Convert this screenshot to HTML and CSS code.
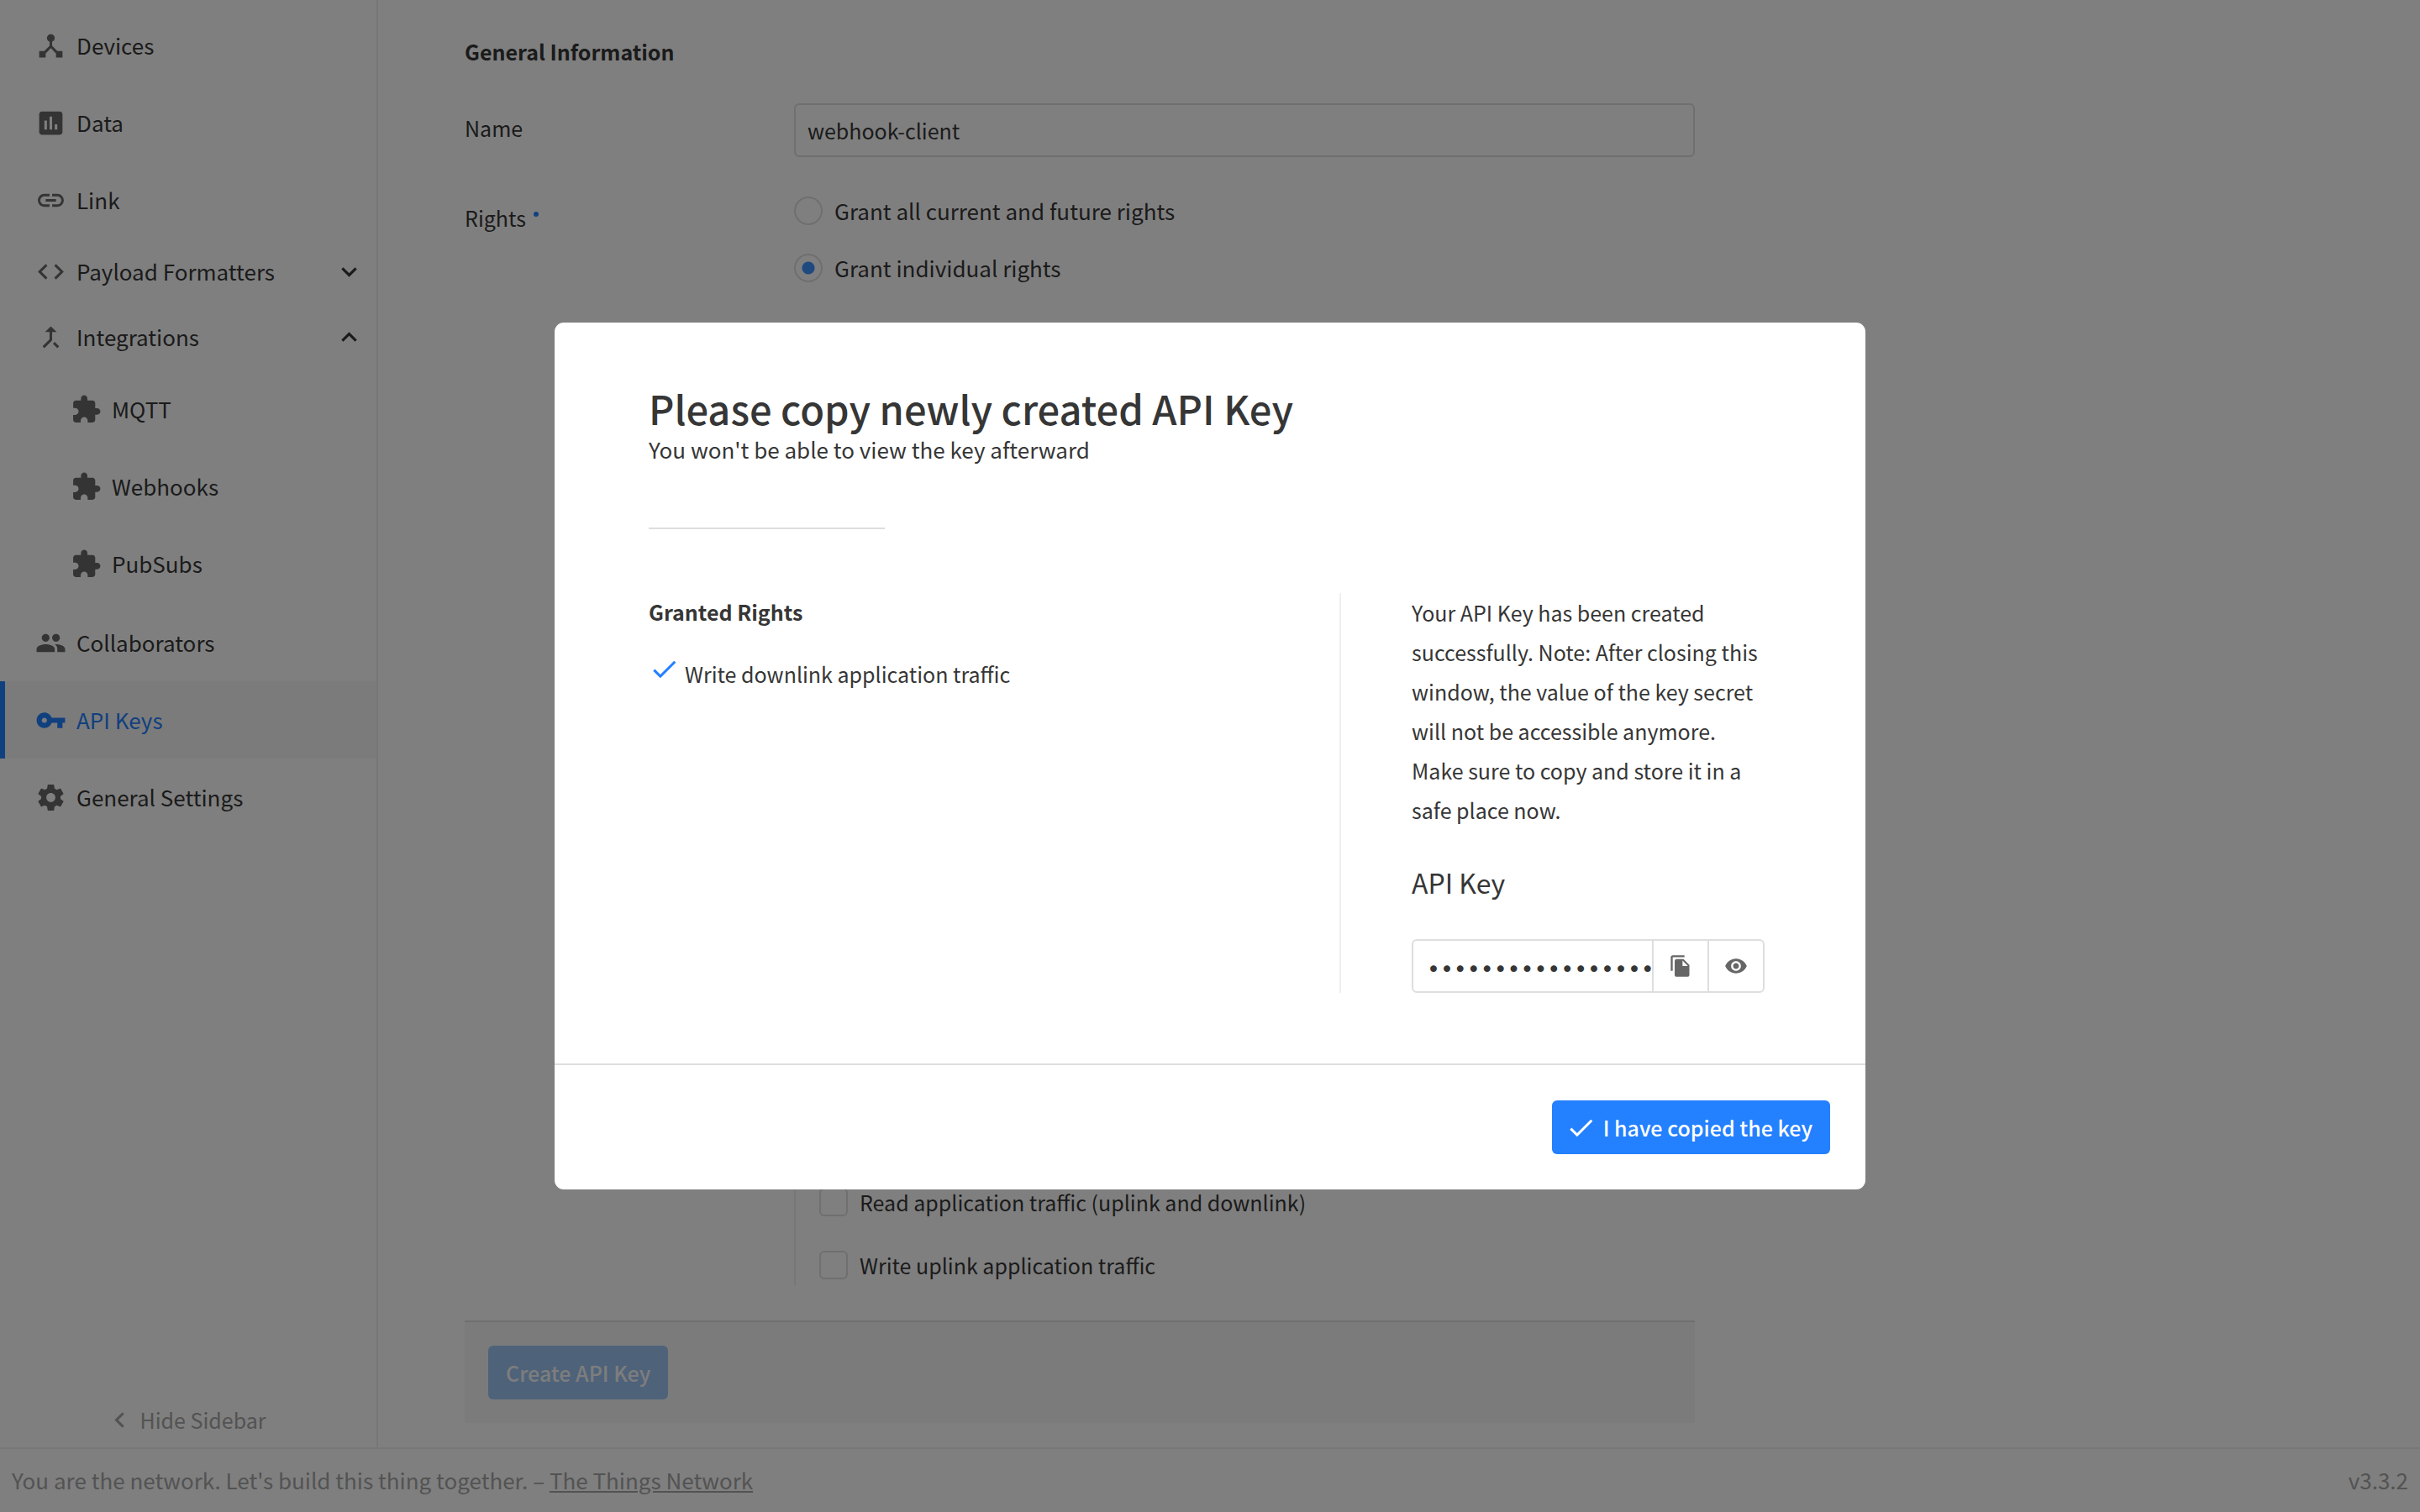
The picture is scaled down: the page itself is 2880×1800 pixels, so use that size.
FILE: index.html
```html
<!DOCTYPE html>
<html lang="en">
<head>
<meta charset="utf-8">
<title>Add API Key - The Things Network</title>
<link rel="stylesheet" href="styles.css">
</head>
<body>
<svg class="sprite" aria-hidden="true">
  <symbol id="i-hub" viewBox="0 0 24 24"><path d="M17 16l-4-4V8.82C14.16 8.4 15 7.3 15 6c0-1.66-1.34-3-3-3S9 4.34 9 6c0 1.3.84 2.4 2 2.82V12l-4 4H3v5h5v-3.05l4-4.2 4 4.2V21h5v-5h-4z"/></symbol>
  <symbol id="i-data" viewBox="0 0 24 24"><path d="M19 3H5c-1.1 0-2 .9-2 2v14c0 1.1.9 2 2 2h14c1.1 0 2-.9 2-2V5c0-1.1-.9-2-2-2zM9 17H7v-7h2v7zm4 0h-2V7h2v10zm4 0h-2v-4h2v4z"/></symbol>
  <symbol id="i-link" viewBox="0 0 24 24"><path d="M3.9 12c0-1.71 1.39-3.1 3.1-3.1h4V7H7c-2.76 0-5 2.24-5 5s2.24 5 5 5h4v-1.9H7c-1.71 0-3.1-1.39-3.1-3.1zM8 13h8v-2H8v2zm9-6h-4v1.9h4c1.71 0 3.1 1.39 3.1 3.1s-1.39 3.1-3.1 3.1h-4V17h4c2.76 0 5-2.24 5-5s-2.24-5-5-5z"/></symbol>
  <symbol id="i-code" viewBox="0 0 24 24"><path d="M9.4 16.6L4.8 12l4.6-4.6L8 6l-6 6 6 6 1.4-1.4zm5.2 0l4.6-4.6-4.6-4.6L16 6l6 6-6 6-1.4-1.4z"/></symbol>
  <symbol id="i-merge" viewBox="0 0 24 24"><path d="M17 20.41L18.41 19 15 15.59 13.59 17 17 20.41zM7.5 8H11v5.59L5.59 19 7 20.41l6-6V8h3.5L12 3.5 7.5 8z"/></symbol>
  <symbol id="i-ext" viewBox="0 0 24 24"><path d="M20.5 11H19V7c0-1.1-.9-2-2-2h-4V3.5C13 2.12 11.88 1 10.5 1S8 2.12 8 3.5V5H4c-1.1 0-1.99.9-1.99 2v3.8H3.5c1.49 0 2.7 1.21 2.7 2.7s-1.21 2.7-2.7 2.7H2V20c0 1.1.9 2 2 2h3.8v-1.5c0-1.49 1.21-2.7 2.7-2.7 1.49 0 2.7 1.21 2.7 2.7V22H17c1.1 0 2-.9 2-2v-4h1.5c1.38 0 2.5-1.12 2.5-2.5S21.88 11 20.5 11z"/></symbol>
  <symbol id="i-people" viewBox="0 0 24 24"><path d="M16 11c1.66 0 2.99-1.34 2.99-3S17.66 5 16 5c-1.66 0-3 1.34-3 3s1.34 3 3 3zm-8 0c1.66 0 2.99-1.34 2.99-3S9.66 5 8 5C6.34 5 5 6.34 5 8s1.34 3 3 3zm0 2c-2.33 0-7 1.17-7 3.5V19h14v-2.5c0-2.33-4.67-3.5-7-3.5zm8 0c-.29 0-.62.02-.97.05 1.16.84 1.97 1.97 1.97 3.45V19h6v-2.5c0-2.33-4.67-3.5-7-3.5z"/></symbol>
  <symbol id="i-key" viewBox="0 0 24 24"><path d="M12.65 10C11.83 7.67 9.61 6 7 6c-3.31 0-6 2.69-6 6s2.69 6 6 6c2.61 0 4.83-1.67 5.65-4H17v4h4v-4h2v-4H12.65zM7 14c-1.1 0-2-.9-2-2s.9-2 2-2 2 .9 2 2-.9 2-2 2z"/></symbol>
  <symbol id="i-gear" viewBox="0 0 24 24"><path d="M19.43 12.98c.04-.32.07-.64.07-.98s-.03-.66-.07-.98l2.11-1.65c.19-.15.24-.42.12-.64l-2-3.46c-.12-.22-.39-.3-.61-.22l-2.49 1c-.52-.4-1.08-.73-1.69-.98l-.38-2.65C14.46 2.18 14.25 2 14 2h-4c-.25 0-.46.18-.49.42l-.38 2.65c-.61.25-1.17.59-1.69.98l-2.49-1c-.23-.09-.49 0-.61.22l-2 3.46c-.13.22-.07.49.12.64l2.11 1.65c-.04.32-.07.65-.07.98s.03.66.07.98l-2.11 1.65c-.19.15-.24.42-.12.64l2 3.46c.12.22.39.3.61.22l2.49-1c.52.4 1.08.73 1.69.98l.38 2.65c.03.24.24.42.49.42h4c.25 0 .46-.18.49-.42l.38-2.65c.61-.25 1.17-.59 1.69-.98l2.49 1c.23.09.49 0 .61-.22l2-3.46c.12-.22.07-.49-.12-.64l-2.11-1.65zM12 15.5c-1.93 0-3.5-1.57-3.5-3.5s1.57-3.5 3.5-3.5 3.5 1.57 3.5 3.5-1.57 3.5-3.5 3.5z"/></symbol>
  <symbol id="i-down" viewBox="0 0 24 24"><path d="M16.59 8.59L12 13.17 7.41 8.59 6 10l6 6 6-6z"/></symbol>
  <symbol id="i-up" viewBox="0 0 24 24"><path d="M12 8l-6 6 1.41 1.41L12 10.83l4.59 4.58L18 14z"/></symbol>
  <symbol id="i-left" viewBox="0 0 24 24"><path d="M15.41 7.41L14 6l-6 6 6 6 1.41-1.41L10.83 12z"/></symbol>
  <symbol id="i-check" viewBox="0 0 24 24"><path d="M9 16.2L4.8 12l-1.4 1.4L9 19 21 7l-1.4-1.4L9 16.2z"/></symbol>
  <symbol id="i-copy" viewBox="0 0 24 24"><path d="M16 1H4c-1.1 0-2 .9-2 2v14h2V3h12V1zm-1 4l6 6v10c0 1.1-.9 2-2 2H7.99C6.89 23 6 22.1 6 21l.01-14c0-1.1.89-2 1.99-2h7zm-1 7h5.5L14 6.5V12z"/></symbol>
  <symbol id="i-eye" viewBox="0 0 24 24"><path d="M12 4.5C7 4.5 2.73 7.61 1 12c1.73 4.39 6 7.5 11 7.5s9.27-3.11 11-7.5c-1.73-4.39-6-7.5-11-7.5zM12 17c-2.76 0-5-2.24-5-5s2.24-5 5-5 5 2.24 5 5-2.24 5-5 5zm0-8c-1.66 0-3 1.34-3 3s1.34 3 3 3 3-1.34 3-3-1.34-3-3-3z"/></symbol>
</svg>

<div class="shell">
  <aside class="sidebar">
    <nav>
      <ul class="nav">
        <li><a class="nav-item" href="#devices"><svg class="icon"><use href="#i-hub"/></svg>Devices</a></li>
        <li><a class="nav-item" href="#data"><svg class="icon"><use href="#i-data"/></svg>Data</a></li>
        <li><a class="nav-item" href="#link"><svg class="icon"><use href="#i-link"/></svg>Link</a></li>
        <li><button class="nav-item nav-toggle" type="button"><svg class="icon"><use href="#i-code"/></svg>Payload Formatters<svg class="icon chevron"><use href="#i-down"/></svg></button></li>
        <li>
          <button class="nav-item nav-toggle" type="button"><svg class="icon"><use href="#i-merge"/></svg>Integrations<svg class="icon chevron"><use href="#i-up"/></svg></button>
          <ul class="nav nav-sub">
            <li><a class="nav-item" href="#mqtt"><svg class="icon"><use href="#i-ext"/></svg>MQTT</a></li>
            <li><a class="nav-item" href="#webhooks"><svg class="icon"><use href="#i-ext"/></svg>Webhooks</a></li>
            <li><a class="nav-item" href="#pubsubs"><svg class="icon"><use href="#i-ext"/></svg>PubSubs</a></li>
          </ul>
        </li>
        <li><a class="nav-item" href="#collaborators"><svg class="icon"><use href="#i-people"/></svg>Collaborators</a></li>
        <li><a class="nav-item active" href="#api-keys"><svg class="icon"><use href="#i-key"/></svg>API Keys</a></li>
        <li><a class="nav-item" href="#settings"><svg class="icon"><use href="#i-gear"/></svg>General Settings</a></li>
      </ul>
    </nav>
    <button class="hide-sidebar" type="button"><svg class="icon"><use href="#i-left"/></svg>Hide Sidebar</button>
  </aside>

  <main class="main">
    <form class="form">
      <h2 class="form-title">General Information</h2>
      <div class="row">
        <label class="label" for="name">Name</label>
        <input class="text-input" id="name" type="text" value="webhook-client">
      </div>
      <div class="row row-rights" role="group" aria-labelledby="rights-label">
        <span class="label" id="rights-label">Rights<span class="required"></span></span>
        <div class="rights">
          <label class="radio"><input type="radio" name="grant">Grant all current and future rights</label>
          <label class="radio"><input type="radio" name="grant" checked>Grant individual rights</label>
          <div class="rights-list">
            <label class="check"><input type="checkbox">Read application traffic (uplink and downlink)</label>
            <label class="check"><input type="checkbox">Write uplink application traffic</label>
          </div>
        </div>
      </div>
      <div class="submit-bar"><button class="button" type="submit" disabled>Create API Key</button></div>
    </form>
  </main>
</div>

<footer class="footer">
  <span>You are the network. Let's build this thing together. – <a href="#ttn">The Things Network</a></span>
  <span>v3.3.2</span>
</footer>

<div class="overlay">
  <section class="modal" role="dialog" aria-modal="true" aria-labelledby="modal-title">
    <div class="modal-body">
      <h1 class="modal-title" id="modal-title">Please copy newly created API Key</h1>
      <p class="modal-subtitle">You won't be able to view the key afterward</p>
      <hr class="rule">
      <div class="columns">
        <div class="granted">
          <h2 class="granted-title">Granted Rights</h2>
          <ul class="granted-list">
            <li><svg class="icon"><use href="#i-check"/></svg>Write downlink application traffic</li>
          </ul>
        </div>
        <div class="secret">
          <p class="secret-note">Your API Key has been created successfully. Note: After closing this window, the value of the key secret will not be accessible anymore. Make sure to copy and store it in a safe place now.</p>
          <label class="secret-title" for="key">API Key</label>
          <div class="secret-field">
            <input id="key" type="password" value="NNSXS.ABCDEFGHIJKLMNOPQ" readonly>
            <button type="button" aria-label="Copy"><svg class="icon"><use href="#i-copy"/></svg></button>
            <button type="button" aria-label="Show"><svg class="icon"><use href="#i-eye"/></svg></button>
          </div>
        </div>
      </div>
    </div>
    <div class="modal-footer">
      <button class="button button-icon" type="button"><svg class="icon"><use href="#i-check"/></svg>I have copied the key</button>
    </div>
  </section>
</div>
</body>
</html>
```
FILE: styles.css
```css
:root {
  --text: #363636;
  --muted: #a6a6a6;
  --icon: #686868;
  --blue: #2380ff;
  --line: #dedede;
  --line-soft: #efefef;
}

* { box-sizing: border-box; }

body {
  margin: 0;
  height: 100vh;
  display: flex;
  flex-direction: column;
  background: #fff;
  color: var(--text);
  font: 400 25px/48px "Noto Sans CJK SC", "Noto Sans", sans-serif;
}

h1, h2, p, ul { margin: 0; padding: 0; }
ul { list-style: none; }
button, input { font: inherit; color: inherit; }
button { border: 0; background: none; padding: 0; cursor: pointer; }

.sprite { display: none; }
.icon { width: 37px; height: 37px; flex: none; fill: currentColor; }

.shell { flex: 1; display: flex; min-height: 0; }

/* Sidebar */
.sidebar {
  width: 450px;
  flex: none;
  display: flex;
  flex-direction: column;
  justify-content: space-between;
  padding-top: 8px;
  border-right: 2px solid var(--line-soft);
}
.nav-item {
  display: flex;
  align-items: center;
  gap: 12px;
  width: 100%;
  height: 92px;
  padding: 0 14px 0 36px;
  border-left: 6px solid transparent;
  color: var(--text);
  font-size: 26px;
  text-align: left;
  text-decoration: none;
}
.nav-item .icon { color: var(--icon); }
.nav-toggle { height: 78px; }
.nav-item .chevron { margin-left: auto; color: var(--text); }
.nav-sub { padding: 1px 0 2px; }
.nav-sub .nav-item { padding-left: 78px; }
.nav-item.active { background: #f7f7f7; border-left-color: var(--blue); }
.nav-item.active, .nav-item.active .icon { color: var(--blue); }
.hide-sidebar {
  display: flex;
  align-items: center;
  justify-content: center;
  gap: 6px;
  height: 66px;
  padding-right: 8px;
  color: var(--muted);
}

/* Form */
.main { flex: 1; display: flex; padding: 37px 103px 29px; }
.form { width: 1464px; display: flex; flex-direction: column; }
.form-title { font-size: 25px; line-height: 48px; margin-bottom: 38px; }
.row { display: grid; grid-template-columns: 392px 1fr; }
.row-rights { flex: 1; margin: 43px 0 42px; }
.label { padding-top: 5px; }
.required {
  display: inline-block;
  width: 6px;
  height: 6px;
  margin-left: 9px;
  border-radius: 50%;
  background: var(--blue);
  vertical-align: 12px;
}
.text-input {
  height: 64px;
  padding: 0 14px;
  border: 2px solid var(--line);
  border-radius: 6px;
  background: #fff;
}
.rights { display: flex; flex-direction: column; gap: 26px; }
.radio, .check { display: flex; align-items: center; gap: 14px; }
.radio { font-size: 26px; line-height: 42px; }
.radio input, .check input {
  appearance: none;
  width: 34px;
  height: 34px;
  flex: none;
  margin: 0;
  border: 2px solid var(--line);
  background: #fff;
}
.radio input { border-radius: 50%; }
.radio input:checked { background: radial-gradient(circle, #3e94ff 7px, #fff 8px); }
.check input { border-radius: 6px; }
.rights-list {
  flex: 1;
  display: flex;
  flex-direction: column;
  justify-content: flex-end;
  gap: 27px;
  margin-top: 26px;
  padding-left: 28px;
  border-left: 2px solid var(--line-soft);
}
.submit-bar {
  padding: 28px;
  border-top: 2px solid var(--line);
  background: #f7f7f7;
}
.button {
  display: inline-flex;
  align-items: center;
  gap: 8px;
  height: 64px;
  padding: 0 21px;
  border-radius: 6px;
  background: var(--blue);
  color: #fff;
  font-weight: 500;
}
.button-icon { padding-left: 16px; }
.button:disabled { background: #9cc4f4; color: #fbfbfb; }
.submit-bar .button { display: flex; }

/* Footer */
.footer {
  display: flex;
  justify-content: space-between;
  align-items: center;
  height: 77px;
  padding: 0 14px 2px;
  border-top: 2px solid var(--line-soft);
  color: var(--muted);
  font-size: 26px;
}
.footer a { color: inherit; }

/* Modal */
.overlay {
  position: fixed;
  inset: 0;
  display: flex;
  align-items: center;
  justify-content: center;
  background: rgba(0, 0, 0, .5);
}
.modal { width: 1560px; border-radius: 11px; background: #fff; }
.modal-body { padding: 70px 112px 84px; }
.modal-title { font-size: 47px; line-height: 64px; font-weight: 500; }
.modal-subtitle { font-size: 26px; line-height: 34px; }
.rule { width: 281px; height: 2px; margin: 76px 0; border: 0; background: var(--line); }
.columns { display: grid; grid-template-columns: 1fr 514px; }
.granted-title { font-size: 25px; line-height: 44px; margin-bottom: 28px; }
.granted-list li { display: flex; align-items: flex-start; gap: 6px; }
.granted-list .icon { color: var(--blue); }
.secret {
  padding-left: 84px;
  border-left: 2px solid var(--line-soft);
}
.secret-note { line-height: 47px; }
.secret-title { display: block; font-size: 32px; margin: 34px 0 40px; line-height: 56px; }
.secret-field {
  display: flex;
  width: 420px;
  height: 64px;
  border: 2px solid var(--line);
  border-radius: 6px;
}
.secret-field input {
  flex: 1;
  min-width: 0;
  border: 0;
  padding: 6px 0 0 16px;
  background: none;
  font: 27px "DejaVu Sans", sans-serif;
}
.secret-field button {
  display: flex;
  align-items: center;
  justify-content: center;
  width: 66px;
  border-left: 2px solid var(--line);
  color: #666;
}
.secret-field .icon { width: 28px; height: 28px; }
.modal-footer {
  display: flex;
  justify-content: flex-end;
  padding: 42px;
  border-top: 2px solid var(--line);
}
```
